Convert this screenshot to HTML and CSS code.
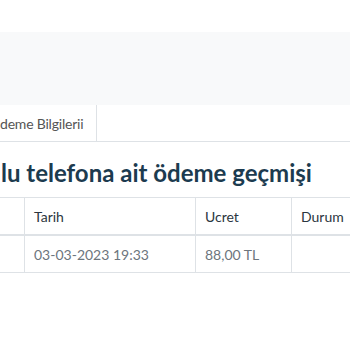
FILE: index.html
```html
<!DOCTYPE HTML><html>
<head>
  <title>Ödeme Geçmişi</title>
  <meta name="viewport" content="width=device-width, initial-scale=1">
  <meta charset="UTF-8">
  <link rel="stylesheet" href="styles.css">
</head>
<body>
  <div class="topbar"></div>
  <div class="banner"></div>
  <div class="tabs">
    <div class="tab">deme Bilgilerii</div>
  </div>
  <h2 class="title">lu telefona ait ödeme geçmişi</h2>
  <table class="history">
    <colgroup>
      <col class="c-no">
      <col class="c-date">
      <col class="c-fee">
      <col class="c-state">
    </colgroup>
    <thead>
      <tr><th></th><th>Tarih</th><th>Ucret</th><th>Durum</th></tr>
    </thead>
    <tbody>
      <tr><td></td><td>03-03-2023 19:33</td><td>88,00 TL</td><td></td></tr>
    </tbody>
  </table>
</body>
</html>
```

FILE: styles.css
```css
html {
  font-family: Lato, "Noto Sans", sans-serif;
}
body {
  margin: 0;
  overflow: hidden;
  background: #fff;
}
.topbar {
  height: 32px;
}
.banner {
  height: 73px;
  background-color: #f8f9fa;
}
.tabs {
  display: flex;
  border-bottom: 1px solid #dee2e6;
}
.tab {
  height: 36px;
  line-height: 38px;
  padding: 0 13px 0 0;
  font-size: 14px;
  letter-spacing: -0.2px;
  color: #555;
  border-right: 1px solid #dee2e6;
  background: #fff;
  white-space: nowrap;
}
.title {
  margin: 16px 0 0 1px;
  height: 39px;
  font-size: 24px;
  font-weight: bold;
  color: #1c3b4f;
  white-space: nowrap;
}
.history {
  margin-left: -40px;
  border-collapse: collapse;
  table-layout: fixed;
  width: 440px;
  font-size: 14px;
}
.c-no { width: 64px; }
.c-date { width: 171px; }
.c-fee { width: 96px; }
.c-state { width: 109px; }
.history th,
.history td {
  height: 36px;
  padding: 0 9px;
  text-align: left;
  border: 1px solid #dee2e6;
  white-space: nowrap;
}
.history th {
  font-weight: normal;
  color: #2b3640;
  border-bottom-width: 2px;
}
.history td {
  color: #6c757d;
}
```
